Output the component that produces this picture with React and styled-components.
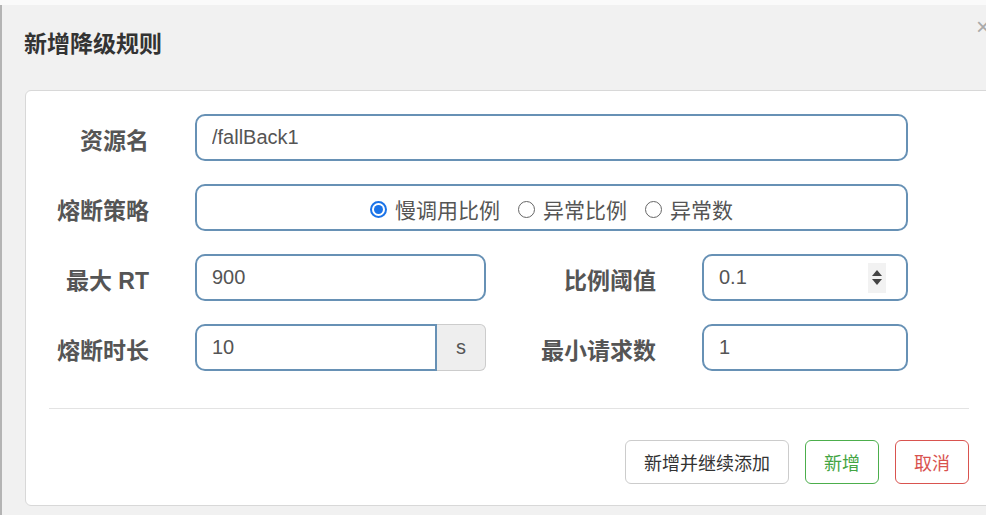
import React from "react";
import styled, { createGlobalStyle } from "styled-components";

const GlobalStyle = createGlobalStyle`
  html, body {
    margin: 0;
    padding: 0;
    background: #f0f0f0;
    overflow: hidden;
  }
  body {
    font-family: "Liberation Sans", "Noto Sans CJK SC", sans-serif;
  }
`;

const TopStrip = styled.div`
  height: 5px;
  background: #fafafa;
`;

const Modal = styled.div`
  position: relative;
  width: 1000px;
  height: 510px;
  background: #f1f1f1;
  border-left: 2px solid #b4b4b4;
  box-sizing: border-box;
`;

const Header = styled.div`
  padding: 14px 22px 25px;
  line-height: 46px;
  font-size: 23px;
  font-weight: 700;
  color: #333;
  font-family: "Noto Sans CJK SC", sans-serif;
`;

const Close = styled.span`
  position: absolute;
  top: 8px;
  right: 10px;
  font-size: 24px;
  color: #aaa;
  font-family: "Liberation Sans", sans-serif;
`;

const Card = styled.div`
  margin-left: 23px;
  width: 968px;
  background: #fff;
  border: 1px solid #d8d8d8;
  border-radius: 6px;
  padding: 23px 23px 21px;
  box-sizing: border-box;
`;

const Form = styled.div`
  display: grid;
  grid-template-columns: 146px 291px 216px 206px;
  row-gap: 23px;
`;

const Label = styled.div`
  padding: 4px 46px 0 0;
  text-align: right;
  font-size: 23px;
  font-weight: 700;
  color: #555;
  line-height: 46px;
  font-family: "Liberation Sans", "Noto Sans CJK SC", sans-serif;
  white-space: nowrap;
  height: 47px;
  box-sizing: border-box;
`;

const Box = styled.div`
  grid-column: ${(p) => (p.$wide ? "2 / 5" : "auto")};
  display: flex;
  align-items: center;
  min-width: 0;
  height: 47px;
  box-sizing: border-box;
  border: 2px solid #6791b5;
  border-radius: ${(p) => (p.$joined ? "10px 0 0 10px" : "10px")};
  background: #fff;
  padding: 0 15px;
  justify-content: ${(p) => (p.$center ? "center" : "flex-start")};
`;

const Field = styled.input`
  flex: 1;
  min-width: 0;
  border: none;
  outline: none;
  padding: 0;
  font-size: 20px;
  color: #555;
  background: transparent;
  font-family: "Liberation Sans", sans-serif;
`;

const Group = styled.div`
  display: flex;
  min-width: 0;
  ${Box} {
    flex: 1;
  }
`;

const Addon = styled.span`
  flex: 0 0 48px;
  display: flex;
  align-items: center;
  justify-content: center;
  background: #eee;
  border: 1px solid #ccc;
  border-left: none;
  border-radius: 0 6px 6px 0;
  font-size: 20px;
  color: #555;
`;

const Spinner = styled.span`
  display: flex;
  flex-direction: column;
  align-items: center;
  justify-content: center;
  gap: 3px;
  width: 18px;
  height: 30px;
  background: #f2f2f2;
  margin-right: 5px;
`;

const Arrow = styled.span`
  width: 0;
  height: 0;
  border-left: 5px solid transparent;
  border-right: 5px solid transparent;
  ${(p) =>
    p.$up ? "border-bottom: 6px solid #444;" : "border-top: 6px solid #444;"}
`;

const RadioItem = styled.label`
  display: flex;
  align-items: center;
  gap: 8px;
  margin-right: 18px;
  padding-top: 3px;
  font-size: 21px;
  color: #555;
  font-family: "Noto Sans CJK SC", sans-serif;
  &:last-child {
    margin-right: 0;
  }
`;

const Dot = styled.span`
  width: 17px;
  height: 17px;
  box-sizing: border-box;
  border-radius: 50%;
  border: ${(p) => (p.$on ? "2px solid #1a73e8" : "1.5px solid #666")};
  display: flex;
  align-items: center;
  justify-content: center;
  &::after {
    content: "";
    width: 9px;
    height: 9px;
    border-radius: 50%;
    background: ${(p) => (p.$on ? "#1a73e8" : "transparent")};
  }
`;

const Divider = styled.hr`
  margin: 37px 0 31px;
  border: none;
  border-top: 1px solid #e3e3e3;
`;

const Footer = styled.div`
  display: flex;
  justify-content: flex-end;
  gap: 16px;
`;

const tones = {
  plain: { border: "#ccc", color: "#333" },
  ok: { border: "#4cae4c", color: "#43a543" },
  cancel: { border: "#d9534f", color: "#d9534f" },
};

const Button = styled.button`
  height: 44px;
  padding: 0 18px;
  background: #fff;
  border: 1px solid ${(p) => tones[p.$tone].border};
  color: ${(p) => tones[p.$tone].color};
  border-radius: 6px;
  font-size: 18px;
  font-family: "Noto Sans CJK SC", sans-serif;
`;

const strategies = ["慢调用比例", "异常比例", "异常数"];

export default function App() {
  return (
    <>
      <GlobalStyle />
      <TopStrip />
      <Modal>
        <Header>新增降级规则</Header>
        <Close>×</Close>
        <Card>
          <Form>
            <Label>资源名</Label>
            <Box $wide>
              <Field defaultValue="/fallBack1" />
            </Box>

            <Label>熔断策略</Label>
            <Box $wide $center>
              {strategies.map((s, i) => (
                <RadioItem key={s}>
                  <Dot $on={i === 0} />
                  {s}
                </RadioItem>
              ))}
            </Box>

            <Label>最大 RT</Label>
            <Box>
              <Field defaultValue="900" />
            </Box>
            <Label>比例阈值</Label>
            <Box>
              <Field defaultValue="0.1" />
              <Spinner>
                <Arrow $up />
                <Arrow />
              </Spinner>
            </Box>

            <Label>熔断时长</Label>
            <Group>
              <Box $joined>
                <Field defaultValue="10" />
              </Box>
              <Addon>s</Addon>
            </Group>
            <Label>最小请求数</Label>
            <Box>
              <Field defaultValue="1" />
            </Box>
          </Form>
          <Divider />
          <Footer>
            <Button $tone="plain">新增并继续添加</Button>
            <Button $tone="ok">新增</Button>
            <Button $tone="cancel">取消</Button>
          </Footer>
        </Card>
      </Modal>
    </>
  );
}
